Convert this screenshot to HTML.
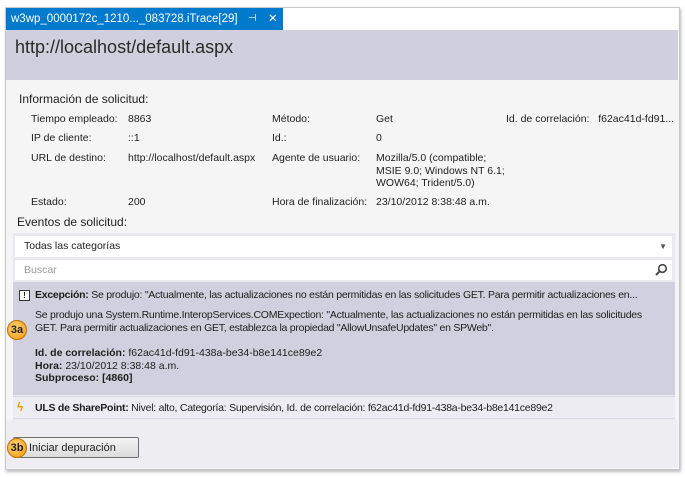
<!DOCTYPE html>
<html><head><meta charset="utf-8"><style>
body{margin:0;width:685px;height:477px;background:#fff;font-family:"Liberation Sans",sans-serif;font-size:10.5px;color:#1e1e1e;position:relative;overflow:hidden}
.a{position:absolute;white-space:nowrap}
.t{letter-spacing:-0.25px}
</style></head><body>
<div class="a" style="left:5px;top:7px;width:673px;height:461px;background:#f5f5f5;border:1px solid #c8c8c8;box-shadow:1px 2px 3px #bbb"></div>
<div class="a" style="left:6px;top:8px;width:672px;height:22px;background:#fff"></div>
<div class="a" style="left:6px;top:8px;width:277px;height:22px;background:#007acc;color:#fff;font-size:11.5px;line-height:22px;padding-left:5px;box-sizing:border-box">w3wp_0000172c_1210..._083728.iTrace[29]<span style="position:absolute;left:242px;font-size:10px">⊣</span><span style="position:absolute;left:262px">✕</span></div>
<div class="a" style="left:6px;top:30px;width:672px;height:50px;background:#cfcfdd"></div>
<div class="a" style="left:15px;top:37px;font-size:18px;color:#2a2a2a">http://localhost/default.aspx</div>
<div class="a" style="left:19px;top:92px;font-size:12px">Información de solicitud:</div>
<div class="a" style="left:31px;top:113px">Tiempo empleado:</div><div class="a" style="left:128px;top:113px">8863</div>
<div class="a" style="left:272px;top:113px">Método:</div><div class="a" style="left:376px;top:113px">Get</div>
<div class="a" style="left:506px;top:113px">Id. de correlación:&nbsp;&nbsp; f62ac41d-fd91...</div>
<div class="a" style="left:31px;top:132px">IP de cliente:</div><div class="a" style="left:128px;top:132px">::1</div>
<div class="a" style="left:272px;top:132px">Id.:</div><div class="a" style="left:376px;top:132px">0</div>
<div class="a" style="left:31px;top:152px">URL de destino:</div><div class="a" style="left:128px;top:152px">http://localhost/default.aspx</div>
<div class="a" style="left:272px;top:152px">Agente de usuario:</div>
<div class="a" style="left:376px;top:152px;line-height:12.5px">Mozilla/5.0 (compatible;<br>MSIE 9.0; Windows NT 6.1;<br>WOW64; Trident/5.0)</div>
<div class="a" style="left:31px;top:196px">Estado:</div><div class="a" style="left:128px;top:196px">200</div>
<div class="a" style="left:272px;top:196px">Hora de finalización:</div><div class="a" style="left:376px;top:196px">23/10/2012 8:38:48 a.m.</div>
<div class="a" style="left:17px;top:215px;font-size:12px">Eventos de solicitud:</div>
<div class="a" style="left:13px;top:233px;width:662px;height:187px;background:#e9e9ef"></div>
<div class="a" style="left:15px;top:236px;width:657px;height:21px;background:#fff;line-height:21px;padding-left:9px;box-sizing:border-box">Todas las categorías<span style="position:absolute;right:5px;font-size:8px;color:#555">▼</span></div>
<div class="a" style="left:15px;top:260px;width:657px;height:20px;background:#fff;line-height:20px;padding-left:9px;box-sizing:border-box;color:#999">Buscar
<svg style="position:absolute;right:4px;top:3px" width="14" height="14"><circle cx="8.5" cy="5.5" r="3.8" fill="none" stroke="#444" stroke-width="1.6"/><line x1="5.8" y1="8.2" x2="2" y2="12" stroke="#444" stroke-width="2"/></svg></div>
<div class="a" style="left:13px;top:282px;width:662px;height:113px;background:#d0d0de"></div>
<div class="a" style="left:19px;top:290px;width:9px;height:9px;border:1px solid #333;font-size:8px;line-height:9px;text-align:center;font-weight:bold;background:#fff">!</div>
<div class="a t" style="left:35px;top:289px"><b>Excepción:</b> Se produjo: "Actualmente, las actualizaciones no están permitidas en las solicitudes GET. Para permitir actualizaciones en...</div>
<div class="a t" style="left:35px;top:309px;line-height:13px">Se produjo una System.Runtime.InteropServices.COMExpection: "Actualmente, las actualizaciones no están permitidas en las solicitudes<br>GET. Para permitir actualizaciones en GET, establezca la propiedad "AllowUnsafeUpdates" en SPWeb".</div>
<div class="a" style="left:35px;top:347px;line-height:12.5px"><b>Id. de correlación:</b> f62ac41d-fd91-438a-be34-b8e141ce89e2<br><b>Hora:</b> 23/10/2012 8:38:48 a.m.<br><b>Subproceso: [4860]</b></div>
<div class="a" style="left:7px;top:320px;width:18px;height:18px;border-radius:50%;background:radial-gradient(circle at 40% 35%,#ffd070,#f39a10);border:1px solid #c07000;font-size:11px;line-height:18px;text-align:center;font-weight:bold">3a</div>
<div class="a" style="left:13px;top:396px;width:662px;height:21px;background:#ececf2;border-top:1px solid #d8d8e0;border-bottom:1px solid #d8d8e0"></div>
<div class="a" style="left:17px;top:400px;color:#e8a000;font-size:12px;font-weight:bold">ϟ</div>
<div class="a t" style="left:35px;top:402px"><b>ULS de SharePoint:</b> Nivel: alto, Categoría: Supervisión, Id. de correlación: f62ac41d-fd91-438a-be34-b8e141ce89e2</div>
<div class="a" style="left:6px;top:420px;width:672px;height:48px;background:#ededf2"></div>
<div class="a" style="left:13px;top:437px;width:126px;height:21px;border:1px solid #707070;border-radius:2px;background:linear-gradient(#f4f4f4,#dcdcdc);line-height:20px;padding-left:15px;box-sizing:border-box;font-size:11px">Iniciar depuración</div>
<div class="a" style="left:7px;top:438px;width:18px;height:18px;border-radius:50%;background:radial-gradient(circle at 40% 35%,#ffd070,#f39a10);border:1px solid #c07000;font-size:11px;line-height:18px;text-align:center;font-weight:bold">3b</div>
</body></html>
